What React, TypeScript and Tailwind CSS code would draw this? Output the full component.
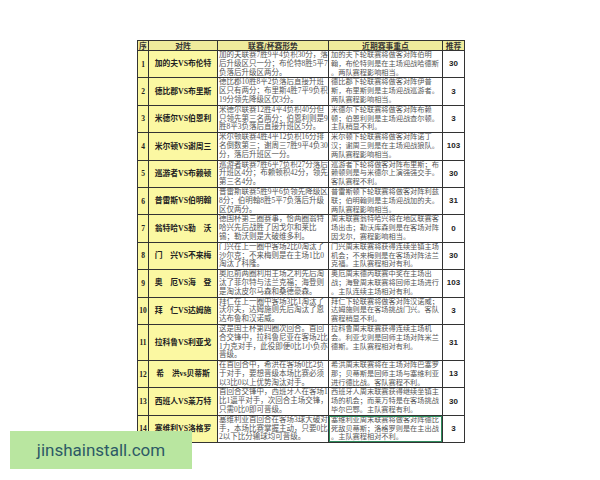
import React from 'react';

type Row = { n: string; m: string; a: string[]; b: string[]; r: string; sel?: boolean };

const rows: Row[] = [
  { n: '1', m: '加的夫VS布伦特', a: ['加的夫联赛7胜9平4负积30分，落', '后升级区只一分；布伦特8胜5平7', '负落后升级区两分。'], b: ['加的夫下轮联赛将做客对阵伯明', '翰，布伦特则是在主场迎战哈德斯', '。两队赛程影响相当。'], r: '30' },
  { n: '2', m: '德比郡VS布里斯', a: ['德比郡10胜8平2负落后直接升班', '区只有两分；布里斯4胜7平9负积', '19分领先降级区仅3分。'], b: ['德比郡下轮联赛将做客对阵伊普', '斯，布里斯则是主场迎战巡游者。', '两队赛程影响相当。'], r: '3' },
  { n: '3', m: '米德尔VS伯恩利', a: ['米德尔联赛12胜4平4负积40分但', '只领先第三名两分；伯恩利则是9', '胜8平3负落后直接升班区5分。'], b: ['米德尔下轮联赛将做客对阵布赖', '顿；伯恩利则是主场迎战查尔顿。', '主队稍显不利。'], r: '3' },
  { n: '4', m: '米尔顿VS谢周三', a: ['米尔顿联赛4胜4平12负积16分排', '名倒数第三；谢周三7胜9平4负30', '分，落后升班区一分。'], b: ['米尔顿下轮联赛将做客对阵诺丁', '汉；谢周三则是在主场迎战狼队。', '两队赛程影响相当。'], r: '103' },
  { n: '5', m: '巡游者VS布赖顿', a: ['巡游者联赛7胜6平7负积27分落后', '升班区4分；布赖顿积42分，领先', '第三名4分。'], b: ['巡游者下轮将做客对阵布里斯；布', '赖顿则是与米德尔上演强强交手。', '客队赛程不利。'], r: '30' },
  { n: '6', m: '普雷斯VS伯明翰', a: ['普雷斯联赛5胜9平6负领先降级区', '8分；伯明翰8胜5平7负落后升级', '区仅两分。'], b: ['普雷斯顿下轮联赛将做客对阵利兹', '联；伯明翰则是主场迎战加的夫。', '两队赛程影响相当。'], r: '31' },
  { n: '7', m: '翁特哈VS勒　沃', a: ['德国杯第三圈赛事，恰两圈翁特', '哈兴先后战胜了因戈尔和莱比', '锡；勒沃则是大破维多利。'], b: ['周末联赛翁特哈兴将在地区联赛客', '场出击；勒沃库森则是在客场对阵', '因戈尔，赛程影响相当。'], r: '0' },
  { n: '8', m: '门　兴VS不来梅', a: ['门兴在上一圈中客场2比0淘汰了', '沙尔克；不来梅则是在主场1比0', '淘汰了科隆。'], b: ['门兴周末联赛将获得连续坐镇主场', '机会；不来梅则是在客场对阵法兰', '克福。主队赛程相对有利。'], r: '30' },
  { n: '9', m: '奥　厄VS海　登', a: ['奥厄前两圈利用主场之利先后淘', '汰了菲尔特与法兰克福；海登则', '是淘汰皮尔马森和桑德豪森。'], b: ['奥厄周末德丙联赛中奖在主场出', '战；海登周末联赛将回师主场进行', '。主队连续主场相对有利。'], r: '103' },
  { n: '10', m: '拜　仁VS达姆施', a: ['拜仁在上一圈中客场3比1淘汰了', '沃尔夫，达姆施则先后淘汰了恩', '达布鲁和汉诺威。'], b: ['拜仁下轮联赛将做客对阵汉诺威；', '达姆施则是在客场挑战门兴。客队', '赛程稍显不利。'], r: '3' },
  { n: '11', m: '拉科鲁VS利亚戈', a: ['这是国王杯第四圈次回合。首回', '合交锋中，拉科鲁尼亚在客场2比', '1力克对手，此役即便0比1小负亦', '晋级。'], b: ['拉科鲁周末联赛获得连续主场机', '会。利亚戈则是回师主场对阵米兰', '德斯。主队赛程相对有利。'], r: '31' },
  { n: '12', m: '希　洪vs贝蒂斯', a: ['在首回合中，希洪在客场0比2负', '于对手，要想晋级本场比赛必须', '以3比0以上优势淘汰对手。'], b: ['希洪周末联赛将在主场对阵巴塞罗', '那；贝蒂斯是回师主场与塞维利亚', '进行德比战。客队赛程不利。'], r: '13' },
  { n: '13', m: '西班人VS莱万特', a: ['首回合交锋中，西班牙人在客场1', '比1逼平对手，次回合主场交锋，', '只需0比0即可晋级。'], b: ['西班牙人周末联赛获得继续坐镇主', '场的机会；而莱万特是在客场挑战', '毕尔巴鄂。主队赛程有利。'], r: '30' },
  { n: '14', m: '塞维利VS洛格罗', a: ['塞维利亚首回合在客场3球大破对', '手，本场比赛掌握主动，只要0比', '2以下比分输球均可晋级。'], b: ['塞维利亚周末联赛将做客对阵德比', '死敌贝蒂斯；洛格罗则是在主出战', '。主队赛程相对不利。'], r: '3', sel: true },
];

export default function App() {
  return (
    <div className="relative w-[600px] h-[480px] bg-white overflow-hidden">
      <div className="pt-[40px] pl-[137px]">
        <table className="table-fixed border-collapse w-[327px] font-['Liberation_Serif','Noto_Sans_CJK_SC',serif] border border-[#222]">
          <colgroup>
            <col className="w-[11px]" />
            <col className="w-[69px]" />
            <col className="w-[111px]" />
            <col className="w-[114px]" />
            <col className="w-[22px]" />
          </colgroup>
          <thead>
            <tr className="h-[10px] bg-[#efeb9c] text-[#333] text-[7.8px] font-bold leading-[9px]">
              <th className="border border-[#333] p-0 text-center font-['Noto_Sans_CJK_SC',sans-serif]">序</th>
              <th className="border border-[#333] p-0 text-center font-['Noto_Sans_CJK_SC',sans-serif]">对阵</th>
              <th className="border border-[#333] p-0 text-center font-['Noto_Sans_CJK_SC',sans-serif]">联赛/杯赛形势</th>
              <th className="border border-[#333] p-0 text-center font-['Noto_Sans_CJK_SC',sans-serif]">近期赛事重点</th>
              <th className="border border-[#333] p-0 text-center font-['Noto_Sans_CJK_SC',sans-serif]">推荐</th>
            </tr>
          </thead>
          <tbody>
            {rows.map((row) => (
              <tr key={row.n}>
                <td className="border border-[#333] p-0 bg-[#fbf8a2] text-center align-middle text-[7.5px] font-bold text-[#222] whitespace-nowrap overflow-hidden">
                  {row.n}
                </td>
                <td className="border border-[#333] p-0 bg-[#fbf8a2] text-center align-middle text-[7.8px] font-bold text-[#222] whitespace-nowrap overflow-hidden font-['Liberation_Serif','Noto_Sans_CJK_SC',serif]">
                  {row.m}
                </td>
                <td className="border border-[#333] pl-[1px] pr-0 py-0 align-top text-[7.5px] leading-[8.8px] text-[#555] whitespace-nowrap overflow-hidden">
                  {row.a.map((l, i) => (
                    <div key={i}>{l}</div>
                  ))}
                </td>
                <td className="relative border border-[#333] pl-[2px] pr-0 py-0 align-top text-[7.2px] leading-[8.8px] text-[#555] whitespace-nowrap overflow-hidden">
                  {row.b.map((l, i) => (
                    <div key={i}>{l}</div>
                  ))}
                  {row.sel && <span className="absolute inset-0 border border-[#2e8c5c] pointer-events-none" />}
                </td>
                <td className="border border-[#333] p-0 text-center align-middle text-[8px] font-bold text-[#222] whitespace-nowrap font-['Liberation_Sans',sans-serif]">
                  {row.r}
                </td>
              </tr>
            ))}
          </tbody>
        </table>
      </div>
      <div className="absolute left-[10px] top-[431px] w-[182px] h-[38px] bg-[#b9e6a0] flex items-center justify-center">
        <span className="font-['Roboto',sans-serif] text-[17px] leading-[20px] text-[#2d5a66]">jinshainstall.com</span>
      </div>
    </div>
  );
}
